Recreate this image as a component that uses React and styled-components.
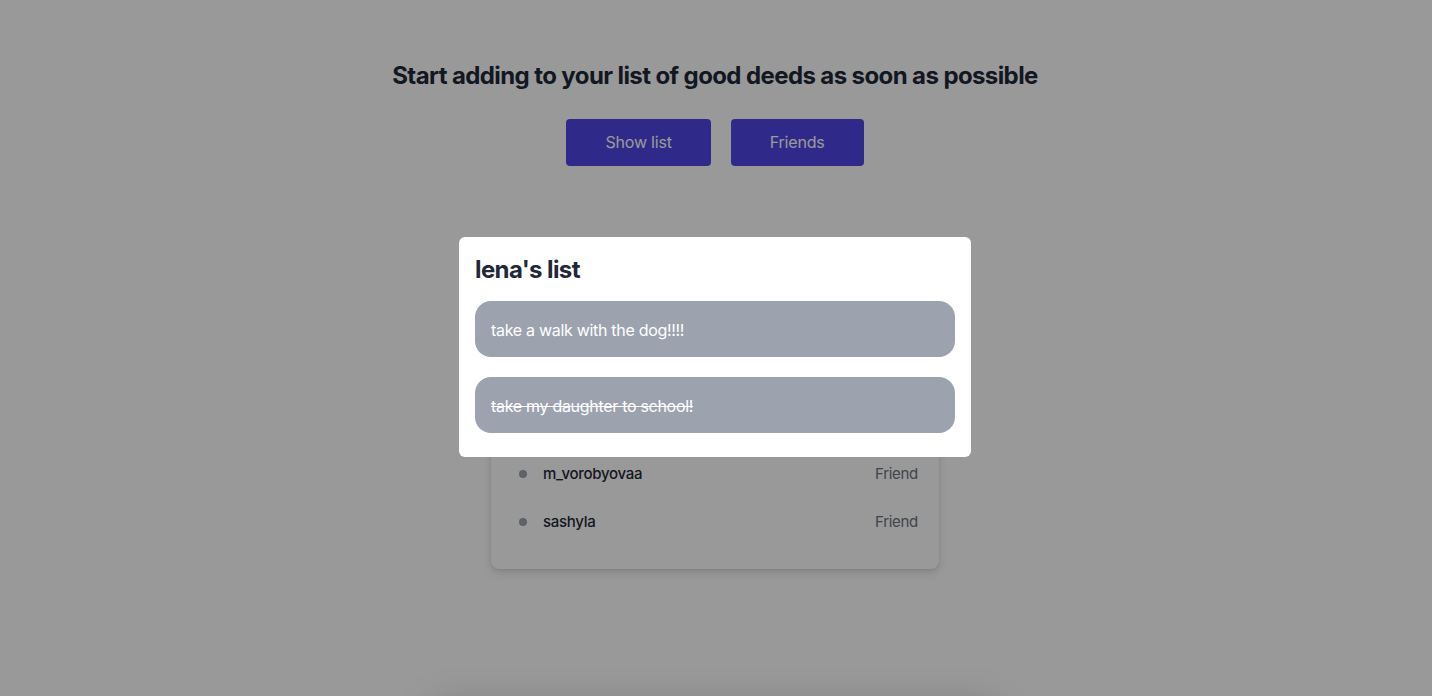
import styled, { createGlobalStyle } from "styled-components";

const GlobalStyle = createGlobalStyle`
	* {
		box-sizing: border-box;
	}
	body {
		margin: 0;
		background: #ffffff;
		font-family: Inter, "Noto Sans", sans-serif;
		color: #1f2937;
	}
`;

const Page = styled.div`
	display: flex;
	flex-direction: column;
	align-items: center;
	padding: 60px 2px 80px 0;
`;
const Heading = styled.h1`
	margin: 0;
	font-size: 24px;
	line-height: 32px;
	font-weight: 700;
	color: #1f2937;
	letter-spacing: -0.6px;
`;
const ButtonRow = styled.div`
	display: flex;
	gap: 20px;
	margin-top: 27px;
`;
const Button = styled.button`
	padding: 12px 39px;
	border: none;
	border-radius: 4px;
	background-color: #4f46e5;
	color: #ffffff;
	font-family: inherit;
	font-size: 16px;
	line-height: 23px;
	letter-spacing: -0.2px;
	cursor: pointer;
`;
const FriendsCard = styled.div`
	width: 448px;
	margin-top: 119px;
	padding: 24px 20px;
	background: #ffffff;
	border-radius: 8px;
	box-shadow: 0 4px 10px rgba(0, 0, 0, 0.12), 0 1px 3px rgba(0, 0, 0, 0.08);
`;
const CardTitle = styled.h2`
	margin: 0 0 16px;
	font-size: 20px;
	line-height: 28px;
	font-weight: 600;
`;
const FriendRow = styled.div`
	display: flex;
	align-items: center;
	height: 48px;
	padding: 0 1px 0 8px;
	font-size: 15px;
	letter-spacing: -0.3px;
`;
const Dot = styled.span`
	width: 8px;
	height: 8px;
	border-radius: 50%;
	background: #9ca3af;
	margin-top: 2px;
`;
const FriendName = styled.span`
	flex: 1;
	margin-left: 16px;
	font-weight: 500;
	color: #1f2937;
`;
const FriendTag = styled.span`
	color: #6b7280;
`;
const Footer = styled.div`
	width: 560px;
	height: 200px;
	margin-top: 140px;
	background: #ffffff;
	border-radius: 8px;
	box-shadow: 0 0 40px rgba(0, 0, 0, 0.25);
`;
const Overlay = styled.div`
	position: fixed;
	inset: 0;
	display: flex;
	align-items: center;
	justify-content: center;
	padding: 0 2px 2px 0;
	background: rgba(0, 0, 0, 0.4);
`;
const Modal = styled.div`
	width: 512px;
	padding: 17px 16px 24px;
	background: #ffffff;
	border-radius: 6px;
`;
const ModalTitle = styled.h2`
	margin: 0 0 15px;
	font-size: 24px;
	line-height: 32px;
	font-weight: 700;
	color: #1f2937;
	letter-spacing: -0.6px;
`;
const DeedList = styled.div`
	display: flex;
	flex-direction: column;
	gap: 20px;
`;
const Deed = styled.div`
	height: 56px;
	display: flex;
	align-items: center;
	padding: 1px 16px 0;
	border-radius: 16px;
	background: #9ca3af;
	color: #ffffff;
	font-size: 16px;
	letter-spacing: -0.3px;
	text-decoration: ${(p) => (p.$done ? "line-through" : "none")};
`;

const friends = ["lena", "anna_k", "m_vorobyovaa", "sashyla"];
const deeds = [
	{ text: "take a walk with the dog!!!!", done: false },
	{ text: "take my daughter to school!", done: true }
];

const App = () => {
	return (
		<>
			<GlobalStyle />
			<Page>
				<Heading>Start adding to your list of good deeds as soon as possible</Heading>
				<ButtonRow>
					<Button>Show list</Button>
					<Button>Friends</Button>
				</ButtonRow>
				<FriendsCard>
					<CardTitle>Your friends</CardTitle>
					{friends.map((name) => (
						<FriendRow key={name}>
							<Dot />
							<FriendName>{name}</FriendName>
							<FriendTag>Friend</FriendTag>
						</FriendRow>
					))}
				</FriendsCard>
				<Footer />
			</Page>
			<Overlay>
				<Modal>
					<ModalTitle>lena's list</ModalTitle>
					<DeedList>
						{deeds.map((d) => (
							<Deed key={d.text} $done={d.done}>
								{d.text}
							</Deed>
						))}
					</DeedList>
				</Modal>
			</Overlay>
		</>
	);
};

export default App;
